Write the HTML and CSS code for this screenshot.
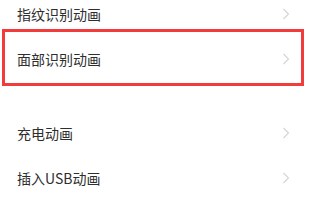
FILE: index.html
```html
<!DOCTYPE html>
<html lang="zh-CN">
<head>
  <meta charset="UTF-8">
  <meta name="viewport" content="width=device-width, initial-scale=1.0">
  <title>动画设置</title>
  <link rel="stylesheet" href="styles.css">
</head>
<body>
  <div class="page">
    <div class="group group-first">
      <div class="row">
        <span class="label">指纹识别动画</span>
        <svg class="chevron" width="8" height="12" viewBox="0 0 8 12"><path d="M1.5 1 L6.5 6 L1.5 11" fill="none" stroke="#d4d4d4" stroke-width="1.1"/></svg>
      </div>
      <div class="row">
        <span class="label">面部识别动画</span>
        <svg class="chevron" width="8" height="12" viewBox="0 0 8 12"><path d="M1.5 1 L6.5 6 L1.5 11" fill="none" stroke="#d4d4d4" stroke-width="1.1"/></svg>
      </div>
    </div>
    <div class="group">
      <div class="row">
        <span class="label">充电动画</span>
        <svg class="chevron" width="8" height="12" viewBox="0 0 8 12"><path d="M1.5 1 L6.5 6 L1.5 11" fill="none" stroke="#d4d4d4" stroke-width="1.1"/></svg>
      </div>
      <div class="row">
        <span class="label">插入USB动画</span>
        <svg class="chevron" width="8" height="12" viewBox="0 0 8 12"><path d="M1.5 1 L6.5 6 L1.5 11" fill="none" stroke="#d4d4d4" stroke-width="1.1"/></svg>
      </div>
    </div>
    <div class="highlight"></div>
  </div>
</body>
</html>
```

FILE: styles.css
```css
* {
  box-sizing: border-box;
}
html, body {
  margin: 0;
  padding: 0;
  background: #fff;
  overflow: hidden;
}
body {
  font-family: "Noto Sans CJK SC", "Noto Sans", sans-serif;
  color: #2e2e2e;
}
.page {
  position: relative;
  width: 314px;
  height: 201px;
}
.group-first {
  margin-top: -9px;
}
.group + .group {
  margin-top: 29px;
}
.row {
  display: flex;
  align-items: center;
  justify-content: space-between;
  height: 45px;
  padding: 0 24px 0 17px;
}
.label {
  font-size: 14px;
  line-height: 1;
}
.chevron {
  display: block;
}
.highlight {
  position: absolute;
  left: 2px;
  top: 38px;
  width: 302px;
  height: 57px;
  border: 3px solid #f23b3b;
}
```
